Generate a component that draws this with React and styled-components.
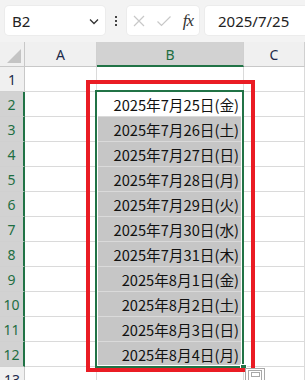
import styled, { createGlobalStyle } from "styled-components";

const GlobalStyle = createGlobalStyle`
  html, body {
    margin: 0;
    padding: 0;
    background: #f3f3f3;
    font-family: "Noto Sans", "Noto Sans CJK JP", sans-serif;
  }
`;

const Page = styled.div`
  position: relative;
  width: 305px;
  height: 380px;
  overflow: hidden;
  background: #f3f3f3;
`;

const Toolbar = styled.div`
  display: flex;
  align-items: center;
  height: 42px;
  padding: 0 0 1px 5px;
  box-sizing: border-box;
`;

const Box = styled.div`
  height: 29px;
  background: #fff;
  border-radius: 4px;
  display: flex;
  align-items: center;
  box-sizing: border-box;
  box-shadow: 0 0 0 1px #ececec;
`;

const NameBox = styled(Box)`
  width: 100px;
  padding: 0 5px 0 7px;
  justify-content: space-between;
  font-size: 15px;
  color: #222;
`;

const Dots = styled.div`
  width: 22px;
  display: flex;
  flex-direction: column;
  align-items: center;
  gap: 2px;
  & span {
    width: 2px;
    height: 2px;
    background: #444;
  }
`;

const FxBox = styled(Box)`
  width: 72px;
  padding: 0 5px;
  justify-content: space-between;
`;

const FxText = styled.span`
  font-family: "Liberation Serif", serif;
  font-style: italic;
  font-size: 17px;
  color: #333;
  letter-spacing: -1px;
  padding-right: 1px;
`;

const ValueBox = styled(Box)`
  flex: 1;
  margin-left: 6px;
  padding-left: 13px;
  border-radius: 4px 0 0 4px;
  font-size: 15px;
  color: #222;
`;

const Sheet = styled.div`
  position: relative;
  display: grid;
  grid-template-columns: 25px 72px 147px 1fr;
  grid-auto-rows: 25px;
  background: #fff;
`;

const Corner = styled.div`
  background: #f0f0f0;
  border-right: 1px solid #c8c8c8;
  border-bottom: 1px solid #c8c8c8;
  box-sizing: border-box;
  position: relative;
  &::after {
    content: "";
    position: absolute;
    right: 3px;
    bottom: 3px;
    border-style: solid;
    border-width: 0 0 14px 14px;
    border-color: transparent transparent #c4c4c4 transparent;
  }
`;

const ColHead = styled.div`
  background: ${(p) => (p.$active ? "#d2d2d2" : "#f0f0f0")};
  color: ${(p) => (p.$active ? "#1e6e42" : "#1d2a4a")};
  border-right: 1px solid #d0d0d0;
  border-bottom: ${(p) => (p.$active ? "2px solid #217346" : "1px solid #c8c8c8")};
  box-sizing: border-box;
  display: flex;
  align-items: center;
  justify-content: center;
  font-size: 14px;
  padding-top: ${(p) => (p.$active ? "1px" : "0")};
`;

const RowHead = styled.div`
  background: ${(p) => (p.$active ? "#d2d2d2" : "#f0f0f0")};
  color: ${(p) => (p.$active ? "#1e6e42" : "#1d2a4a")};
  border-right: ${(p) => (p.$active ? "2px solid #217346" : "1px solid #c8c8c8")};
  border-bottom: 1px solid #d0d0d0;
  box-sizing: border-box;
  display: flex;
  align-items: center;
  justify-content: center;
  font-size: 14px;
`;

const Cell = styled.div`
  background: ${(p) => (p.$sel ? "#c6c6c6" : "#fff")};
  border-right: 1px solid #dadada;
  border-bottom: 1px solid #dadada;
  box-sizing: border-box;
  display: flex;
  align-items: center;
  justify-content: flex-end;
  padding: 1px 4px 0 0;
  font-family: "Noto Sans CJK JP", "Noto Sans", sans-serif;
  font-size: 11pt;
  color: #111;
  white-space: nowrap;
`;

const Selection = styled.div`
  position: absolute;
  left: 95px;
  top: 48px;
  width: 149px;
  height: 278px;
  border: 2px solid #217346;
  box-sizing: border-box;
  &::before {
    content: "";
    position: absolute;
    inset: 0;
    border: 1px solid #fff;
  }
`;

const FillHandle = styled.div`
  position: absolute;
  right: -5px;
  bottom: -5px;
  width: 5px;
  height: 5px;
  background: #217346;
  border: 1px solid #fff;
`;

const RedFrame = styled.div`
  position: absolute;
  left: 86px;
  top: 38px;
  width: 169px;
  height: 292px;
  border: 4px solid #ea1c24;
  box-sizing: border-box;
`;

const PasteIcon = styled.div`
  position: absolute;
  left: 245px;
  top: 368px;
  line-height: 0;
`;

const dates = [
  "2025年7月25日(金)",
  "2025年7月26日(土)",
  "2025年7月27日(日)",
  "2025年7月28日(月)",
  "2025年7月29日(火)",
  "2025年7月30日(水)",
  "2025年7月31日(木)",
  "2025年8月1日(金)",
  "2025年8月2日(土)",
  "2025年8月3日(日)",
  "2025年8月4日(月)",
];

function Row({ n, date }) {
  const active = n >= 2 && n <= 12;
  return (
    <>
      <RowHead $active={active}>{n}</RowHead>
      <Cell />
      <Cell $sel={active && n > 2}>{date}</Cell>
      <Cell />
    </>
  );
}

function App() {
  const rows = [null, ...dates, null];
  return (
    <Page>
      <GlobalStyle />
      <Toolbar>
        <NameBox>
          <span>B2</span>
          <svg width="12" height="12" viewBox="0 0 12 12">
            <path d="M2 4.5 L6 8.5 L10 4.5" fill="none" stroke="#333" strokeWidth="1.3" />
          </svg>
        </NameBox>
        <Dots>
          <span />
          <span />
          <span />
        </Dots>
        <FxBox>
          <svg width="14" height="14" viewBox="0 0 14 14">
            <path d="M2 2 L12 12 M12 2 L2 12" stroke="#c8c8c8" strokeWidth="1.2" />
          </svg>
          <svg width="16" height="14" viewBox="0 0 16 14">
            <path d="M1.5 7.5 L5.5 11.5 L14.5 2.5" fill="none" stroke="#c8c8c8" strokeWidth="1.2" />
          </svg>
          <FxText>fx</FxText>
        </FxBox>
        <ValueBox>2025/7/25</ValueBox>
      </Toolbar>
      <Sheet>
        <Corner />
        <ColHead>A</ColHead>
        <ColHead $active>B</ColHead>
        <ColHead>C</ColHead>
        {rows.map((d, i) => (
          <Row key={i} n={i + 1} date={d} />
        ))}
        <Selection>
          <FillHandle />
        </Selection>
        <RedFrame />
      </Sheet>
      <PasteIcon>
        <svg width="21" height="12" viewBox="0 0 21 12">
          <rect x="0.5" y="0.5" width="19" height="14" fill="#fff" stroke="#a8a8a8" />
          <rect x="3.5" y="2.5" width="13" height="14" fill="#fff" stroke="#a8a8a8" />
          <rect x="6.5" y="4.5" width="8" height="4" fill="#fff" stroke="#a8a8a8" />
        </svg>
      </PasteIcon>
    </Page>
  );
}

export default App;
